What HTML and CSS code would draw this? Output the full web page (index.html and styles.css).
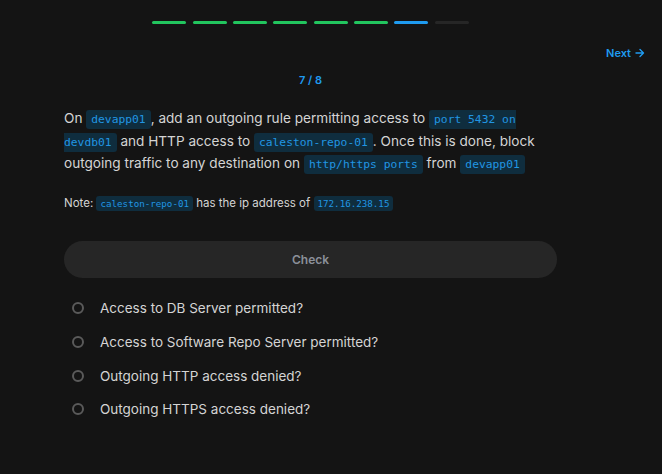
FILE: index.html
```html
<!DOCTYPE html>
<html>
<head>
<meta charset="utf-8">
<link rel="stylesheet" href="styles.css">
</head>
<body>
<div class="page">
  <div class="column">
    <div class="progress">
      <span class="seg done"></span><span class="seg done"></span><span class="seg done"></span><span class="seg done"></span><span class="seg done"></span><span class="seg done"></span><span class="seg current"></span><span class="seg"></span>
    </div>
  </div>
  <div class="nav"><span class="next">Next <svg class="arrow" width="10" height="10" viewBox="0 0 10 10"><path d="M1 5h7.5M5 1.5L8.5 5 5 8.5" fill="none" stroke="currentColor" stroke-width="1.4" stroke-linecap="round" stroke-linejoin="round"/></svg></span></div>
  <div class="column content">
    <div class="counter">7 / 8</div>
    <p class="question">On <code>devapp01</code>, add an outgoing rule permitting access to <code>port 5432 on devdb01</code> and HTTP access to <code>caleston-repo-01</code>. Once this is done, block outgoing traffic to any destination on <code>http/https ports</code> from <code>devapp01</code></p>
    <p class="note">Note: <code>caleston-repo-01</code> has the ip address of <code>172.16.238.15</code></p>
    <button class="check">Check</button>
    <ul class="checks">
      <li><span class="radio"></span>Access to DB Server permitted?</li>
      <li><span class="radio"></span>Access to Software Repo Server permitted?</li>
      <li><span class="radio"></span>Outgoing HTTP access denied?</li>
      <li><span class="radio"></span>Outgoing HTTPS access denied?</li>
    </ul>
  </div>
</div>
</body>
</html>
```

FILE: styles.css
```css
html, body {
  margin: 0;
  padding: 0;
  background: #141414;
}
body {
  font-family: Inter, "Noto Sans", sans-serif;
  color: #d4d4d4;
  width: 662px;
  height: 474px;
  overflow: hidden;
}
.page {
  width: 662px;
}
.column {
  width: 621px;
  box-sizing: border-box;
}
.progress {
  display: flex;
  justify-content: center;
  gap: 6.3px;
  padding-top: 21px;
  height: 3px;
}
.seg {
  display: block;
  width: 34px;
  height: 3px;
  border-radius: 2px;
  background: #262626;
}
.seg.done { background: #22c55e; }
.seg.current { background: #1f9bf0; }
.nav {
  display: flex;
  justify-content: flex-end;
  padding-right: 17px;
  margin-top: 22px;
  height: 14px;
}
.next {
  display: flex;
  align-items: center;
  gap: 4px;
  color: #1f9bf0;
  font-weight: 600;
  font-size: 11px;
  line-height: 14px;
}
.arrow { display: block; }
.content {
  padding: 0 64px;
}
.counter {
  text-align: center;
  color: #1f9bf0;
  font-weight: 600;
  font-size: 11px;
  line-height: 14px;
  margin-top: 13px;
}
.question {
  margin: 20px 0 0;
  font-size: 13.6px;
  line-height: 22.5px;
  color: #d4d4d4;
}
code {
  font-family: "DejaVu Sans Mono", "Liberation Mono", monospace;
  font-size: 11.3px;
  line-height: 1;
  color: #2196e3;
  background: #0f2d3e;
  padding: 3px 5px;
  border-radius: 3px;
}
.note {
  margin: 20px 0 0;
  font-size: 11.5px;
  line-height: 16px;
}
.note code {
  font-size: 9.2px;
  padding: 2px 4px;
}
.check {
  display: block;
  width: 100%;
  height: 37px;
  margin-top: 30px;
  border: none;
  border-radius: 19px;
  background: #262626;
  color: #8b9099;
  font-family: Inter, "Noto Sans", sans-serif;
  font-weight: 600;
  font-size: 12px;
}
.checks {
  list-style: none;
  margin: 14px 0 0;
  padding: 0 0 0 8px;
}
.checks li {
  display: flex;
  align-items: center;
  height: 33.7px;
  font-size: 13.5px;
  color: #d4d4d4;
}
.radio {
  width: 8px;
  height: 8px;
  border: 2px solid #5a5a5a;
  border-radius: 50%;
  margin-right: 16px;
  flex: none;
}
```
